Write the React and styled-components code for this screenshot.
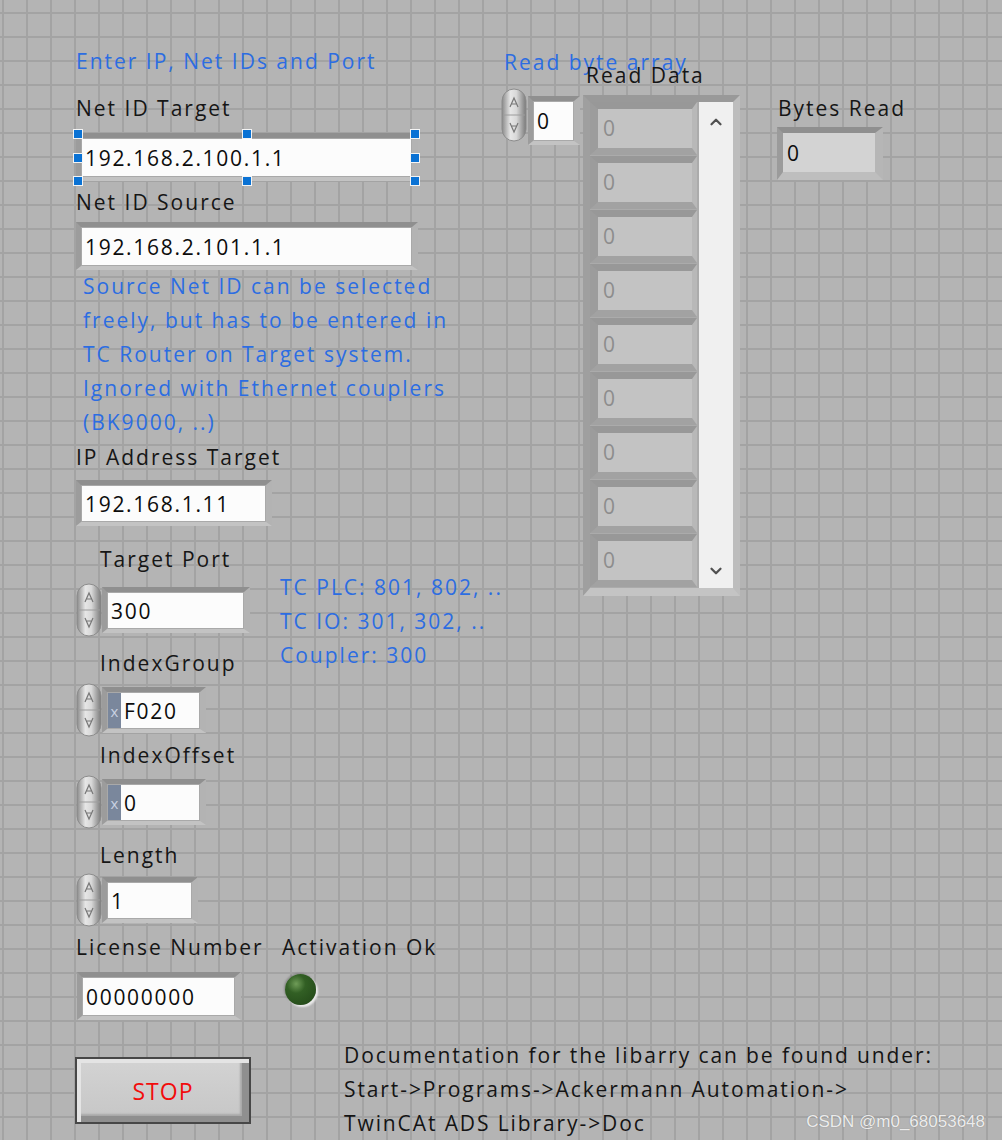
import React from 'react';
import styled, { createGlobalStyle } from 'styled-components';
import { ChevronUp, ChevronDown } from 'lucide-react';

const GlobalStyle = createGlobalStyle`
  html, body {
    margin: 0;
    padding: 0;
  }
  body {
    background-color: #b4b4b4;
    background-image:
      linear-gradient(to right, #a3a3a3 2px, transparent 2px),
      linear-gradient(to bottom, #a3a3a3 2px, transparent 2px);
    background-size: 24px 24px;
    background-position: 2px 12px;
    font-family: "Open Sans", "Noto Sans", sans-serif;
  }
`;

const Panel = styled.div`
  position: relative;
  width: 1002px;
  height: 1140px;
  box-sizing: border-box;
  padding-left: 76px;
  overflow: hidden;
  font-size: 21px;
  letter-spacing: 2px;
`;

const TopSection = styled.div`
  display: flex;
  align-items: flex-start;
`;

const LeftCol = styled.div`
  width: 425px;
  display: flex;
  flex-direction: column;
  align-items: flex-start;
`;

const RightCol = styled.div`
  display: flex;
  align-items: flex-start;
`;

const Label = styled.div`
  color: #161616;
  line-height: 26px;
  white-space: nowrap;
  margin-top: ${(p) => p.$mt || 0}px;
  margin-left: ${(p) => p.$ml || 0}px;
`;

const BlueText = styled.div`
  color: #2c6de2;
  line-height: ${(p) => p.$lh || 26}px;
  white-space: nowrap;
  margin-top: ${(p) => p.$mt || 0}px;
  margin-left: ${(p) => p.$ml || 0}px;
  margin-bottom: ${(p) => p.$mb || 0}px;
`;

const Frame = styled.div`
  display: flex;
  box-sizing: border-box;
  width: ${(p) => p.$w}px;
  height: ${(p) => p.$h || 48}px;
  margin-top: ${(p) => p.$mt || 0}px;
  margin-left: ${(p) => p.$ml || 0}px;
  border-style: solid;
  border-width: 5px 6px 4px 5px;
  border-color: #8f8f8f #b3b3b3 #c3c3c3 #9c9c9c;
  background: #a9a9a9;
  padding: 1px;
`;

const Field = styled.div`
  flex: 1;
  display: flex;
  align-items: center;
  background: #fcfcfc;
  color: #0c0c0c;
  padding-left: 3px;
  letter-spacing: 1.7px;
  white-space: nowrap;
  overflow: hidden;
`;

const Radix = styled.div`
  width: 13px;
  background: #7a879c;
  color: #c9d2e2;
  font-size: 15px;
  display: flex;
  align-items: center;
  justify-content: center;
  letter-spacing: 0;
`;

const Selected = styled.div`
  position: relative;
  margin-top: ${(p) => p.$mt || 0}px;
`;

const Handle = styled.span`
  position: absolute;
  width: 8px;
  height: 8px;
  background: #0a72d4;
  border: 1px solid #f4f4f4;
  left: ${(p) => p.$x}px;
  top: ${(p) => p.$y}px;
`;

const NumericRow = styled.div`
  display: flex;
  align-items: center;
  margin-top: ${(p) => p.$mt || 0}px;
`;

const PortRow = styled.div`
  display: flex;
  align-items: flex-start;
`;

const Column = styled.div`
  display: flex;
  flex-direction: column;
  align-items: flex-start;
  margin-top: ${(p) => p.$mt || 0}px;
  margin-left: ${(p) => p.$ml || 0}px;
  width: ${(p) => (p.$w ? `${p.$w}px` : 'auto')};
`;

const ArrayRow = styled.div`
  display: flex;
  align-items: flex-start;
`;

const ArrayFrame = styled.div`
  display: flex;
  gap: 2px;
  box-sizing: border-box;
  width: 157px;
  margin-top: 7px;
  margin-left: 3px;
  border-style: solid;
  border-width: 7px 7px 8px 7px;
  border-color: #999999 #bdbdbd #c4c4c4 #9f9f9f;
  background: #ababab;
`;

const Cells = styled.div`
  display: flex;
  flex-direction: column;
`;

const Cell = styled.div`
  box-sizing: border-box;
  width: 107px;
  height: 53px;
  margin-bottom: 1px;
  border-style: solid;
  border-width: 7px 5px 7px 8px;
  border-color: #989898 #b8b8b8 #a2a2a2 #9c9c9c;
  background: #c3c3c3;
  color: #8d8d8d;
  padding-left: 5px;
  line-height: 39px;
`;

const Scrollbar = styled.div`
  width: 34px;
  background: #f0f0f0;
  display: flex;
  flex-direction: column;
  justify-content: space-between;
  align-items: center;
  padding: 11px 0 8px;
  color: #505050;
`;

const Indicator = styled.div`
  display: flex;
  box-sizing: border-box;
  width: 106px;
  height: 53px;
  margin-top: 6px;
  margin-left: 2px;
  border-style: solid;
  border-width: 6px 8px 8px 6px;
  border-color: #8f8f8f #b6b6b6 #bebebe #9b9b9b;
  background: #d3d3d3;
  color: #0c0c0c;
  align-items: center;
  padding-left: 4px;
`;

const Row = styled.div`
  display: flex;
  align-items: flex-start;
  margin-top: ${(p) => p.$mt || 0}px;
`;

const Led = styled.div`
  width: 31px;
  height: 31px;
  margin-top: 14px;
  margin-left: 3px;
  border-radius: 50%;
  background: radial-gradient(circle at 36% 32%, #6f9c58 0%, #325f24 32%, #204416 100%);
  box-shadow: 2px 2px 2px rgba(245, 245, 245, 0.85), -1px -1px 2px rgba(90, 90, 90, 0.45);
`;

const StopButton = styled.button`
  box-sizing: border-box;
  width: 176px;
  height: 67px;
  margin-top: 19px;
  margin-left: -1px;
  border: 2px solid #474747;
  background: linear-gradient(#d3d3d3, #c6c6c6);
  box-shadow: inset 4px 4px 0 #e4e4e4, inset -7px -6px 0 #8f8f8f, inset -9px -8px 2px #a8a8a8;
  color: #f20c0c;
  font-family: "Open Sans", sans-serif;
  font-size: 23px;
  letter-spacing: 1px;
  padding: 0;
`;

const DocText = styled.div`
  margin-left: 93px;
  color: #141414;
  line-height: 34px;
  white-space: nowrap;
  letter-spacing: 1.9px;
`;

const Watermark = styled.div`
  position: absolute;
  right: 17px;
  bottom: 8px;
  color: rgba(250, 250, 250, 0.9);
  font-family: "Liberation Sans", sans-serif;
  font-size: 17px;
  letter-spacing: 0;
  text-shadow: 0 0 1px rgba(90, 90, 90, 0.6);
`;

const Spinner = () => (
  <svg width="26" height="54" viewBox="0 0 26 54">
    <defs>
      <linearGradient id="spinGrad" x1="0" x2="1" y1="0" y2="0">
        <stop offset="0" stopColor="#8a8a8a" />
        <stop offset="0.35" stopColor="#e6e6e6" />
        <stop offset="0.6" stopColor="#d8d8d8" />
        <stop offset="1" stopColor="#7a7a7a" />
      </linearGradient>
    </defs>
    <rect x="1" y="1" width="24" height="52" rx="12" fill="url(#spinGrad)" stroke="#8c8c8c" />
    <line x1="2" y1="27" x2="24" y2="27" stroke="#9c9c9c" />
    <path d="M9 19 L13 10 L17 19 M10 16 H16" stroke="#777" strokeWidth="1.2" fill="none" />
    <path d="M9 35 L13 44 L17 35 M10 38 H16" stroke="#777" strokeWidth="1.2" fill="none" />
  </svg>
);

const Numeric = ({ width, value, radix, mt }) => (
  <NumericRow $mt={mt}>
    <Spinner />
    <Frame $w={width} $h={46}>
      {radix && <Radix>x</Radix>}
      <Field>{value}</Field>
    </Frame>
  </NumericRow>
);

const handles = [
  [-3, -4], [166, -4], [334, -4],
  [-3, 20], [334, 20],
  [-3, 43], [166, 43], [334, 43],
];

export default function App() {
  return (
    <Panel>
      <GlobalStyle />
      <TopSection>
        <LeftCol>
          <BlueText $mt={48}>Enter IP, Net IDs and Port</BlueText>
          <Label $mt={21}>Net ID Target</Label>
          <Selected $mt={12}>
            <Frame $w={342}>
              <Field>192.168.2.100.1.1</Field>
            </Frame>
            {handles.map(([x, y], i) => (
              <Handle key={i} $x={x} $y={y} />
            ))}
          </Selected>
          <Label $mt={8}>Net ID Source</Label>
          <Frame $w={342} $mt={7}>
            <Field>192.168.2.101.1.1</Field>
          </Frame>
          <BlueText $lh={34} $mt={-1} $ml={7}>
            Source Net ID can be selected
            <br />
            freely, but has to be entered in
            <br />
            TC Router on Target system.
            <br />
            Ignored with Ethernet couplers
            <br />
            (BK9000, ..)
          </BlueText>
          <Label $mt={5}>IP Address Target</Label>
          <Frame $w={196} $h={46} $mt={10}>
            <Field>192.168.1.11</Field>
          </Frame>
          <PortRow>
            <Column $w={204}>
              <Label $mt={20} $ml={24}>Target Port</Label>
              <Numeric mt={11} width={148} value="300" />
            </Column>
            <BlueText $lh={34} $mt={44} $mb={-60}>
              TC PLC: 801, 802, ..
              <br />
              TC IO: 301, 302, ..
              <br />
              Coupler: 300
            </BlueText>
          </PortRow>
          <Label $mt={13} $ml={24}>IndexGroup</Label>
          <Numeric mt={7} width={104} value="F020" radix />
          <Label $mt={5} $ml={24}>IndexOffset</Label>
          <Numeric mt={7} width={104} value="0" radix />
          <Label $mt={13} $ml={24}>Length</Label>
          <Numeric mt={5} width={96} value="1" />
        </LeftCol>
        <RightCol>
          <Column>
            <BlueText $mt={49} $ml={3}>Read byte array</BlueText>
            <Label $mt={-13} $ml={85}>Read Data</Label>
            <ArrayRow>
              <Spinner />
              <Frame $w={52} $h={49} $mt={8} $ml={1}>
                <Field>0</Field>
              </Frame>
              <ArrayFrame>
                <Cells>
                  {Array.from({ length: 9 }).map((_, i) => (
                    <Cell key={i}>0</Cell>
                  ))}
                </Cells>
                <Scrollbar>
                  <ChevronUp size={18} strokeWidth={3} />
                  <ChevronDown size={18} strokeWidth={3} />
                </Scrollbar>
              </ArrayFrame>
            </ArrayRow>
          </Column>
          <Column $mt={95} $ml={35}>
            <Label $ml={3}>Bytes Read</Label>
            <Indicator>0</Indicator>
          </Column>
        </RightCol>
      </TopSection>
      <Row $mt={7}>
        <Column $w={206}>
          <Label>License Number</Label>
          <Frame $w={164} $mt={12} $ml={1}>
            <Field>00000000</Field>
          </Frame>
        </Column>
        <Column>
          <Label>Activation Ok</Label>
          <Led />
        </Column>
      </Row>
      <Row $mt={18}>
        <StopButton>STOP</StopButton>
        <DocText>
          Documentation for the libarry can be found under:
          <br />
          Start-&gt;Programs-&gt;Ackermann Automation-&gt;
          <br />
          TwinCAt ADS Library-&gt;Doc
        </DocText>
      </Row>
      <Watermark>CSDN @m0_68053648</Watermark>
    </Panel>
  );
}
